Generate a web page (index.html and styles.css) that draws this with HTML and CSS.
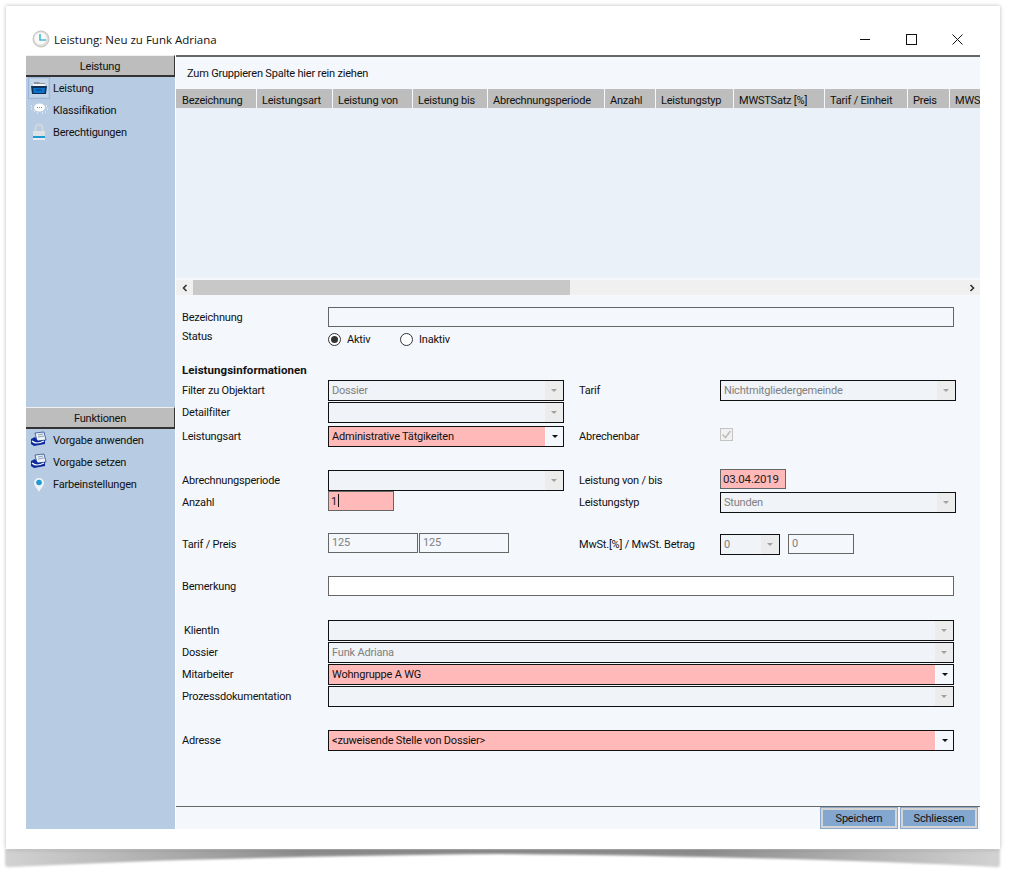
FILE: index.html
```html
<!DOCTYPE html>
<html lang="de">
<head>
<meta charset="utf-8">
<title>Leistung</title>
<link rel="stylesheet" href="styles.css">
</head>
<body>
<svg class="drop" width="1014" height="29" viewBox="0 0 1014 29" aria-hidden="true">
  <defs>
    <linearGradient id="dg" x1="0" x2="1" y1="0" y2="0">
      <stop offset="0" stop-color="#d2d2d2"/>
      <stop offset=".3" stop-color="#8c8c8c"/>
      <stop offset=".7" stop-color="#8c8c8c"/>
      <stop offset="1" stop-color="#d2d2d2"/>
    </linearGradient>
    <filter id="db"><feGaussianBlur stdDeviation="1.3"/></filter>
  </defs>
  <path d="M5 0H1000V15Q1000 19 995 18Q800 8 500 5Q200 8 12 18Q5 19 5 15Z" fill="url(#dg)" filter="url(#db)"/>
</svg>
<div class="window">
  <header class="titlebar">
    <svg class="appicon" width="18" height="18" viewBox="0 0 18 18">
      <circle cx="9" cy="9" r="8" fill="#dededa" stroke="#c4c4be"/>
      <circle cx="8.5" cy="8.5" r="6" fill="#fafaf8"/>
      <path d="M8 4V10H14" fill="none" stroke="#48bcd8" stroke-width="1.7"/>
    </svg>
    <span class="wintitle">Leistung: Neu zu Funk Adriana</span>
    <div class="winbtns">
      <svg width="11" height="11" viewBox="0 0 11 11"><path d="M0 5.5H10" stroke="#111" fill="none"/></svg>
      <svg width="11" height="11" viewBox="0 0 11 11"><rect x=".5" y=".5" width="10" height="10" stroke="#111" fill="none"/></svg>
      <svg width="11" height="11" viewBox="0 0 11 11"><path d="M.5 .5L10.5 10.5M10.5 .5L.5 10.5" stroke="#111" fill="none"/></svg>
    </div>
  </header>
  <div class="frame">
    <aside class="sidebar">
      <section class="group first">
        <h2 class="grouphead">Leistung</h2>
        <div class="navitem selected">
          <svg width="18" height="18" viewBox="0 0 18 18"><path d="M4 3H9L10 4H15V7H4Z" fill="#8f969e"/><path d="M3 5H15V7H3Z" fill="#f2f4f6"/><path d="M1 7H17L16 15H2Z" fill="#10305c"/><path d="M3 9H15L14.500 14H3.500Z" fill="#0a74c8"/><path d="M6 10H12V12H6Z" fill="#0a55a8"/></svg>
          <span>Leistung</span>
        </div>
        <div class="navitem">
          <svg width="18" height="18" viewBox="0 0 18 18"><ellipse cx="9.5" cy="6.5" rx="5.5" ry="4" fill="#fff"/><path d="M7 6.5h1M9 6.5h1M11 6.5h1" stroke="#6d8cb0"/><path d="M1 5h1M1 8h1M16 5h1M17 8h1M15 11h1M12 12h1M7 12h1M4 10h1" stroke="#fff"/></svg>
          <span>Klassifikation</span>
        </div>
        <div class="navitem">
          <svg width="18" height="18" viewBox="0 0 18 18"><path d="M5.5 8V5a3.500 3.500 0 0 1 7 0V8" fill="none" stroke="#d2d7dc" stroke-width="2"/><path d="M3 8H15V13H3Z" fill="#dde2e7"/><path d="M3 13H15V15H3Z" fill="#1f9ad0"/><path d="M3 15H15V17H3Z" fill="#e9edf1"/></svg>
          <span>Berechtigungen</span>
        </div>
      </section>
      <section class="group">
        <h2 class="grouphead">Funktionen</h2>
        <div class="navitem">
          <svg width="18" height="18" viewBox="0 0 18 18"><path d="M5 2L14 1L16 9L7 10Z" fill="#eef3f8" stroke="#2b4a8f" stroke-width=".8"/><path d="M8 4L13 3M8 6L14 5" stroke="#8aa0bd"/><path d="M1 8L5 6L8 10L15 9V13L4 15L1 13Z" fill="#0c2a9c"/><path d="M2 10C5 13 10 12 14 10" fill="none" stroke="#fff" stroke-width="1.2"/></svg>
          <span>Vorgabe anwenden</span>
        </div>
        <div class="navitem">
          <svg width="18" height="18" viewBox="0 0 18 18"><path d="M5 2L14 1L16 9L7 10Z" fill="#eef3f8" stroke="#2b4a8f" stroke-width=".8"/><path d="M8 4L13 3M8 6L14 5" stroke="#8aa0bd"/><path d="M1 8L5 6L8 10L15 9V13L4 15L1 13Z" fill="#0c2a9c"/><path d="M2 10C5 13 10 12 14 10" fill="none" stroke="#fff" stroke-width="1.2"/></svg>
          <span>Vorgabe setzen</span>
        </div>
        <div class="navitem">
          <svg width="18" height="18" viewBox="0 0 18 18"><path d="M9 17C7 13 4 11 4 8a5 5 0 0 1 10 0C14 11 11 13 9 17Z" fill="#eef3f8"/><circle cx="9" cy="7.500" r="2.800" fill="#1f9ad0"/></svg>
          <span>Farbeinstellungen</span>
        </div>
      </section>
    </aside>
    <main class="main">
      <div class="grouppanel">Zum Gruppieren Spalte hier rein ziehen</div>
      <div class="gridhead">
        <div class="col w81">Bezeichnung</div>
        <div class="col w76">Leistungsart</div>
        <div class="col w80">Leistung von</div>
        <div class="col w75">Leistung bis</div>
        <div class="col w117">Abrechnungsperiode</div>
        <div class="col w51">Anzahl</div>
        <div class="col w78">Leistungstyp</div>
        <div class="col w91">MWSTSatz [%]</div>
        <div class="col w83">Tarif / Einheit</div>
        <div class="col w42">Preis</div>
        <div class="col w30">MWST</div>
      </div>
      <div class="gridbody"></div>
      <div class="hscroll">
        <div class="arrow"><svg width="8" height="8" viewBox="0 0 8 8"><path d="M5.5 1L2.5 4L5.5 7" fill="none" stroke="#333" stroke-width="1.6"/></svg></div>
        <div class="thumb"></div>
        <div class="track"></div>
        <div class="arrow"><svg width="8" height="8" viewBox="0 0 8 8"><path d="M2.5 1L5.5 4L2.5 7" fill="none" stroke="#333" stroke-width="1.6"/></svg></div>
      </div>
      <form class="form">
        <div class="row top-bez"><label>Bezeichnung</label><div class="input wide"></div></div>
        <div class="row statusrow">
          <label>Status</label>
          <div class="radios">
            <span class="radio on"></span><span class="rlabel first">Aktiv</span>
            <span class="radio"></span><span class="rlabel">Inaktiv</span>
          </div>
        </div>
        <h3 class="section">Leistungsinformationen</h3>
        <div class="row two">
          <label>Filter zu Objektart</label>
          <div class="combo dis"><span class="val">Dossier</span><span class="btn"><i></i></span></div>
          <label>Tarif</label>
          <div class="combo dis"><span class="val">Nichtmitgliedergemeinde</span><span class="btn"><i></i></span></div>
        </div>
        <div class="row two">
          <label>Detailfilter</label>
          <div class="combo dis"><span class="val"></span><span class="btn"><i></i></span></div>
        </div>
        <div class="row two gap2">
          <label>Leistungsart</label>
          <div class="combo req"><span class="val">Administrative Tätgikeiten</span><span class="btn"><i></i></span></div>
          <label>Abrechenbar</label>
          <svg class="check" width="13" height="13" viewBox="0 0 13 13"><rect x=".5" y=".5" width="12" height="12" fill="#f1f1f1" stroke="#c4c4c4"/><path d="M2.5 6.5L5.5 9.5L10.5 3" fill="none" stroke="#bdbdbd" stroke-width="1.5"/></svg>
        </div>
        <div class="row two gap22">
          <label>Abrechnungsperiode</label>
          <div class="combo dis"><span class="val"></span><span class="btn"><i></i></span></div>
          <label>Leistung von / bis</label>
          <div class="input req date">03.04.2019</div>
        </div>
        <div class="row two">
          <label>Anzahl</label>
          <div class="input req count">1<span class="caret"></span></div>
          <label>Leistungstyp</label>
          <div class="combo dis"><span class="val">Stunden</span><span class="btn"><i></i></span></div>
        </div>
        <div class="row two gap20">
          <label>Tarif / Preis</label>
          <div class="pair raised">
            <div class="input ro p90">125</div><div class="input ro p90">125</div>
          </div>
          <label>MwSt.[%] / MwSt. Betrag</label>
          <div class="pair wide8">
            <div class="combo dis mw"><span class="val">0</span><span class="btn"><i></i></span></div>
            <div class="input ro p66">0</div>
          </div>
        </div>
        <div class="row gap20"><label>Bemerkung</label><div class="input wide white"></div></div>
        <div class="row gap22"><label class="indent">KlientIn</label><div class="combo dis wide"><span class="val"></span><span class="btn"><i></i></span></div></div>
        <div class="row"><label>Dossier</label><div class="combo dis wide"><span class="val">Funk Adriana</span><span class="btn"><i></i></span></div></div>
        <div class="row"><label>Mitarbeiter</label><div class="combo req wide"><span class="val">Wohngruppe A WG</span><span class="btn"><i></i></span></div></div>
        <div class="row"><label>Prozessdokumentation</label><div class="combo dis wide"><span class="val"></span><span class="btn"><i></i></span></div></div>
        <div class="row gap22"><label>Adresse</label><div class="combo req wide"><span class="val">&lt;zuweisende Stelle von Dossier&gt;</span><span class="btn"><i></i></span></div></div>
      </form>
      <footer class="footer">
        <button type="button" class="action">Speichern</button>
        <button type="button" class="action">Schliessen</button>
      </footer>
    </main>
  </div>
</div>
</body>
</html>
```
FILE: styles.css
```css
* { box-sizing: border-box; }
html, body { margin: 0; padding: 0; }
body {
  position: relative;
  width: 1014px;
  height: 878px;
  overflow: hidden;
  background: #fff;
  font-family: Roboto, "Liberation Sans", Arial, sans-serif;
  font-size: 11px;
  letter-spacing: -.2px;
  color: #111;
  padding: 6px 0 0 6px;
}
.drop { position: absolute; left: 0; top: 849px; }
.window {
  position: relative;
  width: 994px;
  height: 843px;
  background: #fff;
  box-shadow: 0 0 4px rgba(0,0,0,.28);
  padding: 0 20px;
}
.titlebar { height: 49px; display: flex; align-items: center; padding: 17px 0 0 6px; }
.appicon { margin-right: 4px; }
.wintitle { font-family: "Open Sans", sans-serif; font-size: 11.5px; letter-spacing: 0; color: #111; }
.winbtns { margin-left: auto; display: flex; gap: 35px; padding-right: 17px; align-items: center; }
.frame { display: flex; height: 774px; }
.sidebar { width: 149px; background: #b7cce2; display: flex; flex-direction: column; flex: none; }
.group.first { height: 352px; }
.grouphead {
  margin: 0;
  height: 22px;
  padding-top: 1px;
  font-size: 11px;
  font-weight: 400;
  background: #bdbdbd;
  border-top: 1px solid #f0f0f0;
  border-right: 1px solid #333;
  border-bottom: 2px solid #333;
  display: flex; align-items: center; justify-content: center;
}
.navitem { height: 22px; display: flex; align-items: center; padding-left: 4px; gap: 5px; }
.navitem svg { flex: none; }
.navitem.selected svg { outline: 1px solid #9db8d6; outline-offset: 1px; background: #c3d5e8; }
.main { flex: 1; margin-left: 1px; background: #f4f7fb; min-width: 0; display: flex; flex-direction: column; border-top: 2px solid #666; overflow: hidden; }
.grouppanel { height: 33px; padding: 10px 0 0 11px; }
.gridhead { height: 19px; display: flex; background: #bdbdbd; overflow: hidden; flex: none; }
.col { flex: none; height: 19px; padding: 5px 0 0 5px; border-right: 1px solid #f4f7fb; white-space: nowrap; overflow: hidden; }
.w81 { width: 81px; padding-left: 6px; } .w76 { width: 76px; } .w80 { width: 80px; } .w75 { width: 75px; } .w117 { width: 117px; }
.w51 { width: 51px; } .w78 { width: 78px; } .w91 { width: 91px; } .w83 { width: 83px; } .w42 { width: 42px; } .w30 { width: 30px; border-right: 0; }
.gridbody { height: 170px; background: #ebf1f8; flex: none; }
.hscroll { margin-top: 2px; height: 15px; display: flex; background: #f0f0f0; flex: none; }
.arrow { width: 17px; height: 15px; display: flex; align-items: center; justify-content: center; }
.thumb { width: 377px; background: #c8c8c8; }
.track { flex: 1; }
.form { height: 511px; padding: 12px 0 0 6px; flex: none; display: flex; flex-direction: column; }
.row { display: flex; align-items: center; height: 22px; flex: none; }
.row > label { width: 146px; flex: none; }
.row.two { display: grid; grid-template-columns: 146px 236px 156px 236px; align-items: center; }
.row.two > label:nth-of-type(2) { width: 141px; margin-left: 15px; }
.top-bez { height: 19px; }
.top-bez label { padding-top: 1px; }
.statusrow { height: 22px; margin-top: 1px; }
.statusrow label { margin-top: -4px; }
.radios { display: flex; align-items: center; padding-top: 2px; }
.radio { width: 13px; height: 13px; border: 1px solid #333; border-radius: 50%; background: #fff; position: relative; flex: none; }
.radio.on::after { content: ""; position: absolute; left: 2px; top: 2px; width: 7px; height: 7px; border-radius: 50%; background: #333; }
.rlabel { margin: 0 0 0 6px; }
.rlabel.first { width: 53px; }
.section { margin: 13px 0 0; height: 17px; font-size: 11.5px; letter-spacing: .05px; line-height: 16px; font-weight: 700; }
.gap2 { margin-top: 2px; }
.gap22 { margin-top: 22px; }
.gap20 { margin-top: 20px; }
.indent { padding-left: 2px; }
.input { height: 20px; border: 1px solid #666; padding: 2px 0 0 3px; background: transparent; }
.input.white { background: #fff; }
.wide { width: 626px; }
.input.req { background: #ffb9b9; color: #222; }
.date { width: 66px; padding: 2px 0 0 2px; margin-top: -3px; font-size: 11.5px; }
.count { width: 66px; padding: 2px 0 0 2px; margin-top: -2px; }
.caret { display: inline-block; width: 1px; height: 13px; background: #111; vertical-align: -2px; margin-left: 1px; }
.input.ro { color: #808080; }
.p90 { width: 90px; }
.p66 { width: 66px; }
.pair { display: flex; gap: 1px; width: 236px; }
.pair.raised { margin-top: -2px; }
.wide8 { gap: 8px; }
.combo { height: 21px; width: 236px; border: 1px solid #111; display: flex; background: #f4f7fb; flex: none; }
.combo.wide { width: 626px; }
.combo.dis { color: #808080; }
.combo.dis .val { background: #f0f3f7; }
.combo.req .val { background: #ffb9b9; color: #111; }
.combo.req .btn { background: #f4f7fb; border-left: 1px solid #fff; }
.combo.req .btn i { border-top-color: #111; }
.val { flex: 1; padding: 3px 0 0 3px; white-space: nowrap; overflow: hidden; }
.btn { width: 18px; background: #ececec; display: flex; align-items: center; justify-content: center; flex: none; }
.btn i { display: block; width: 0; height: 0; border: 3px solid transparent; border-top-color: #a0a0a0; border-bottom: 0; }
.combo.mw { width: 60px; }
.check { margin-top: -3px; }
.footer { height: 23px; border-top: 1px solid #666; display: flex; justify-content: flex-end; gap: 2px; padding-right: 2px; flex: none; }
.action {
  width: 78px;
  height: 22px;
  margin: 0;
  padding: 0;
  font: inherit;
  letter-spacing: inherit;
  color: #111;
  background: #84a7d0;
  border: 3px solid #d4d4d4;
  outline: 1px solid #8aa8cc;
  outline-offset: -1px;
}
```
